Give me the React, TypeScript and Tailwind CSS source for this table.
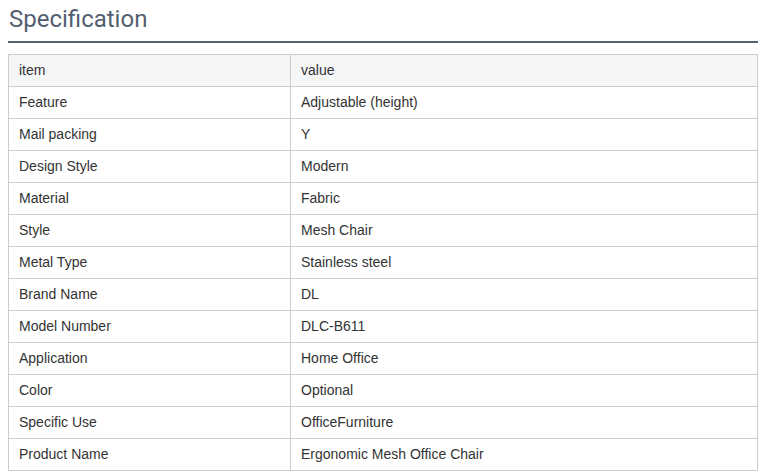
const ROWS: [string, string][] = [
  ['Feature', 'Adjustable (height)'],
  ['Mail packing', 'Y'],
  ['Design Style', 'Modern'],
  ['Material', 'Fabric'],
  ['Style', 'Mesh Chair'],
  ['Metal Type', 'Stainless steel'],
  ['Brand Name', 'DL'],
  ['Model Number', 'DLC-B611'],
  ['Application', 'Home Office'],
  ['Color', 'Optional'],
  ['Specific Use', 'OfficeFurniture'],
  ['Product Name', 'Ergonomic Mesh Office Chair'],
];

export default function App() {
  return (
    <div className="min-h-screen bg-white px-2 pt-[5px]">
      {/* Title */}
      <h2
        className="w-[750px] border-b-2 border-[#546174] pb-[7px] pl-px text-[24px] leading-[29px] text-[#535e70]"
        style={{ fontFamily: 'Roboto, "Noto Sans", sans-serif' }}
      >
        Specification
      </h2>

      {/* Spec table */}
      <table
        className="mt-[11px] w-[750px] border-collapse text-[14px] text-[#333]"
        style={{ fontFamily: '"Liberation Sans", Arial, sans-serif' }}
      >
        <thead>
          <tr className="h-[32px] bg-[#f5f6f8]">
            <th className="w-[282px] border border-[#cccccc] px-[10px] text-left font-normal">item</th>
            <th className="border border-[#cccccc] px-[10px] text-left font-normal">value</th>
          </tr>
        </thead>
        <tbody>
          {ROWS.map(([k, v]) => (
            <tr key={k} className="h-[32px]">
              <td className="border border-[#cccccc] px-[10px]">{k}</td>
              <td className="border border-[#cccccc] px-[10px]">{v}</td>
            </tr>
          ))}
        </tbody>
      </table>
    </div>
  );
}
